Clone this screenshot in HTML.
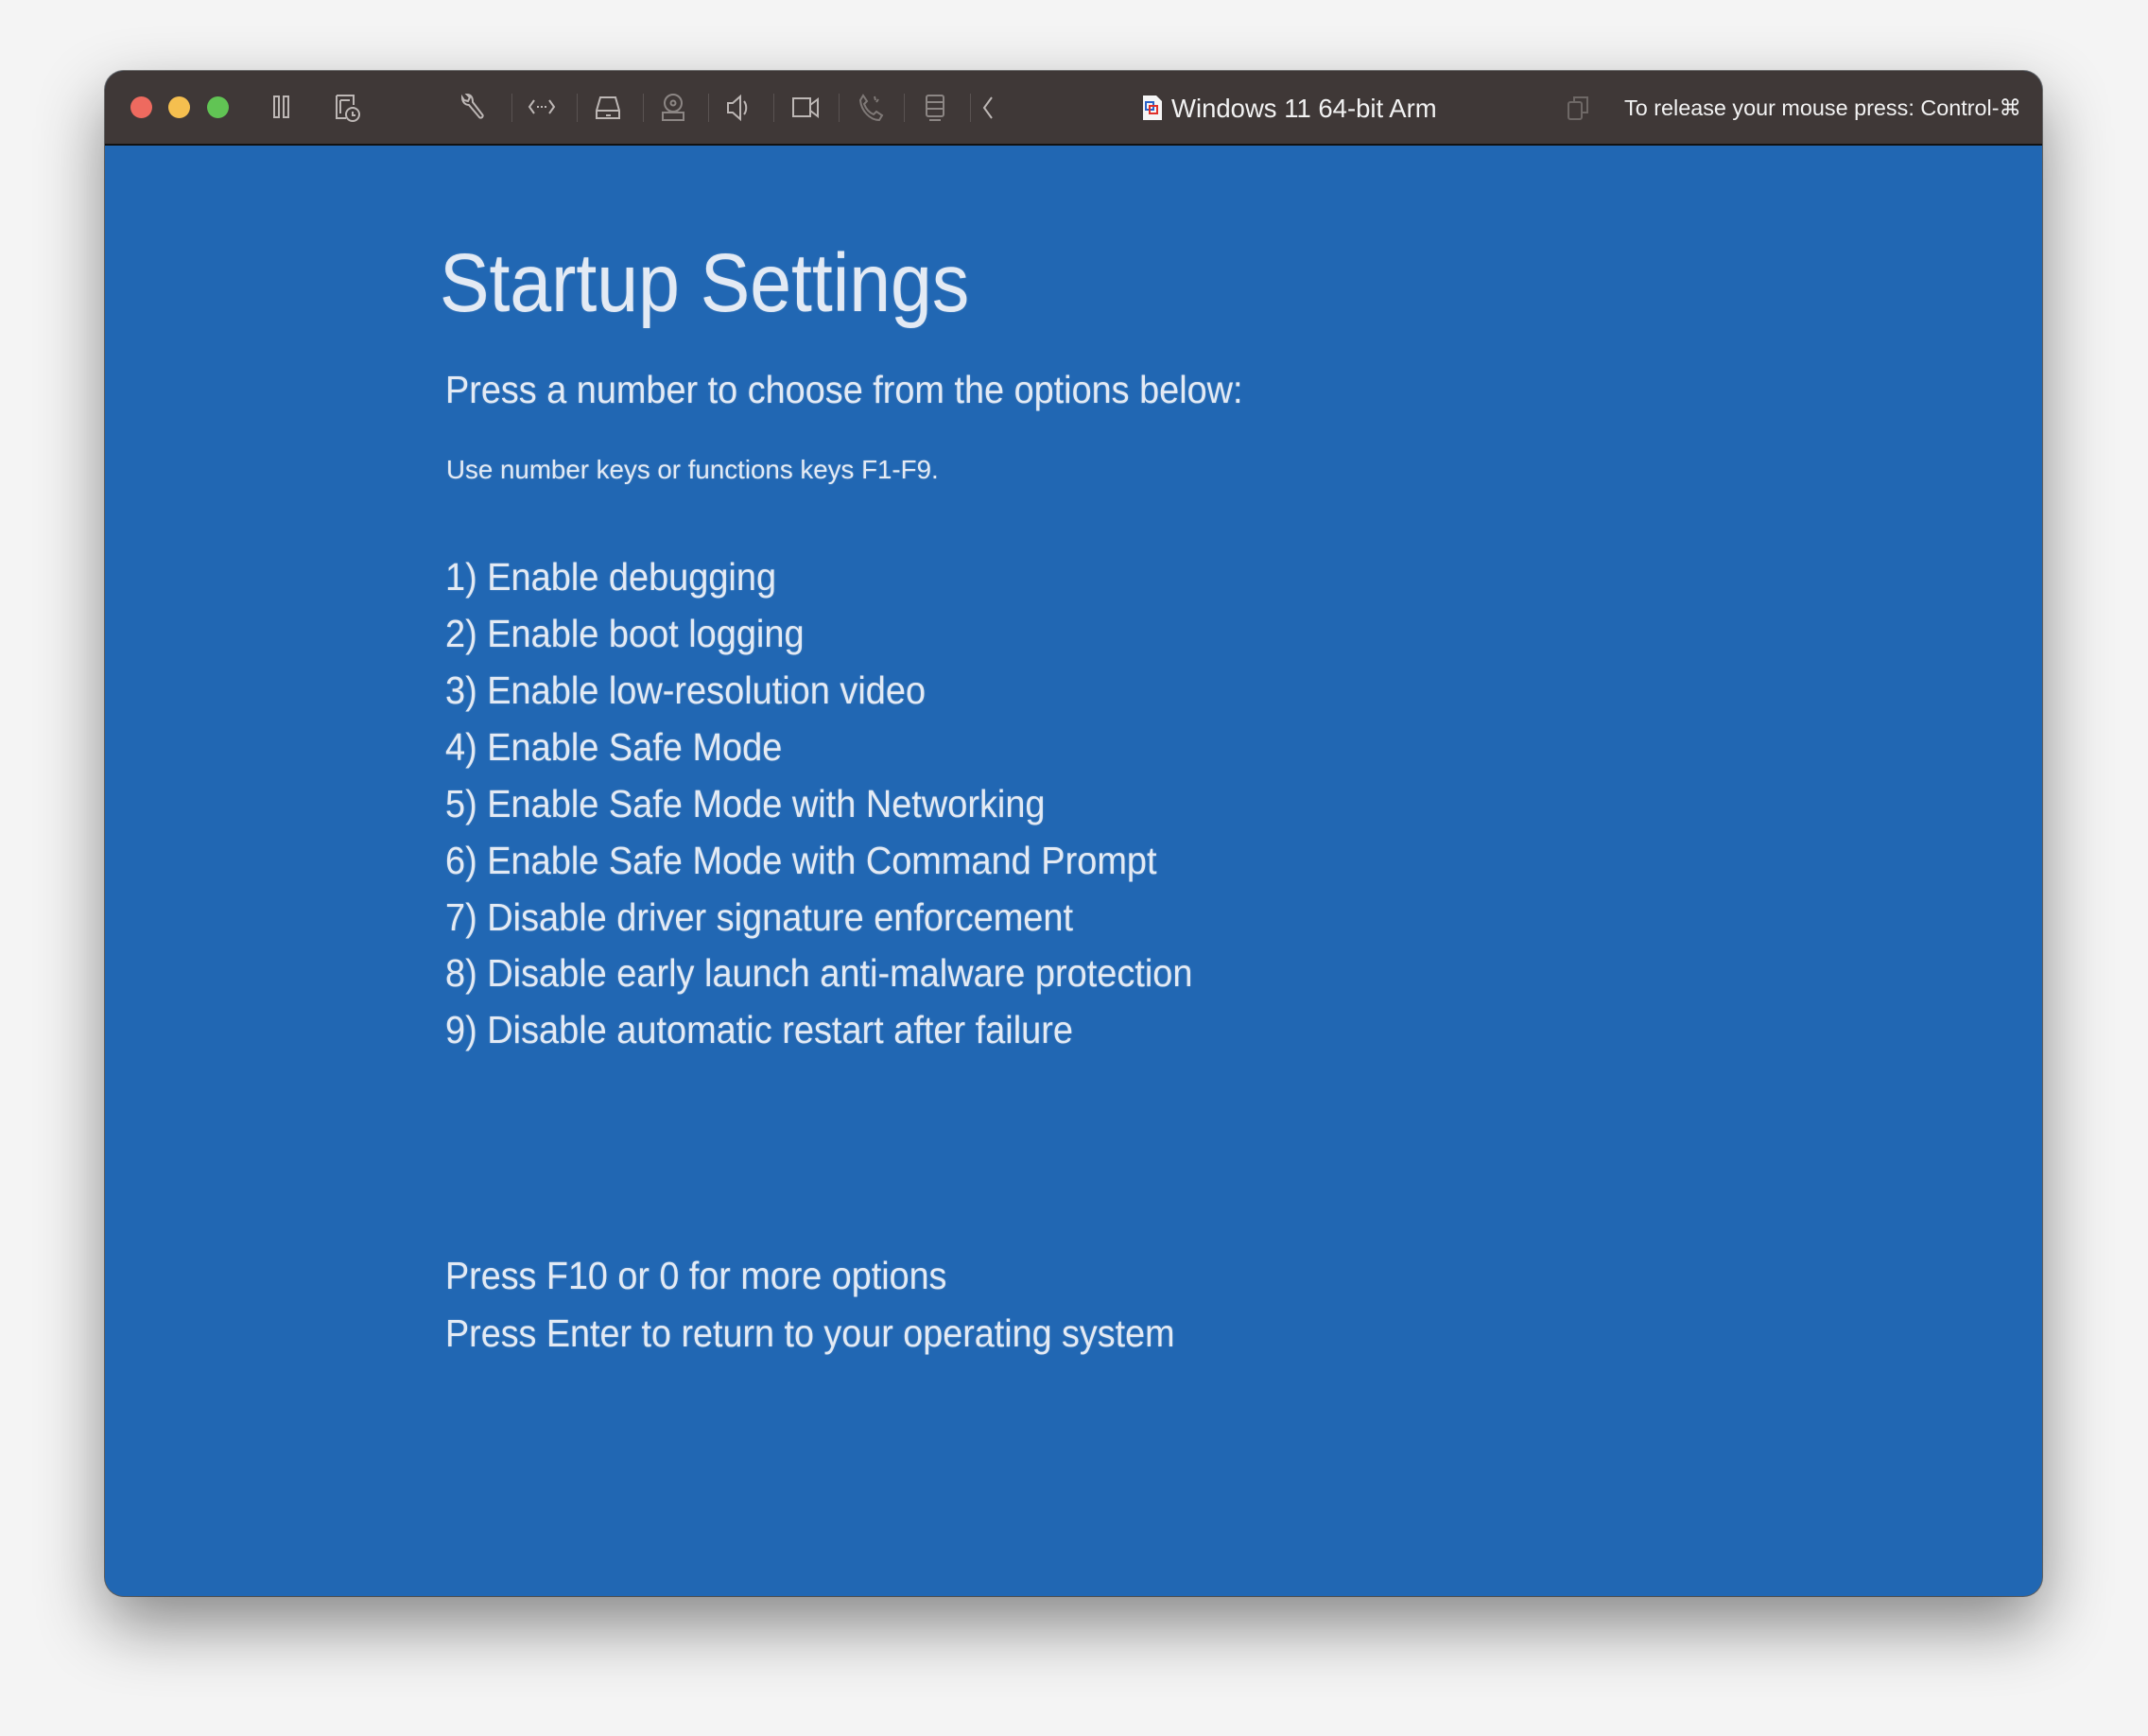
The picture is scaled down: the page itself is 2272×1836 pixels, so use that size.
<!DOCTYPE html>
<html><head><meta charset="utf-8"><style>
html,body{margin:0;padding:0;}
body{width:2272px;height:1836px;background:#f4f4f4;position:relative;overflow:hidden;font-family:"Liberation Sans",sans-serif;}
.win{position:absolute;left:111px;top:75px;width:2049px;height:1613px;border-radius:20px;overflow:hidden;box-shadow:0 30px 70px rgba(0,0,0,.45),0 0 0 1px rgba(0,0,0,.5);background:#2167b3;}
.bar{position:absolute;left:0;top:0;width:100%;height:77px;background:#3f3837;border-bottom:2px solid #111;}
.dot{position:absolute;top:27px;width:23px;height:23px;border-radius:50%;}
.ic{position:absolute;top:22px;}
.sep{position:absolute;top:24px;width:1px;height:30px;background:#5a5352;}
.t{position:absolute;color:#f2f2f2;font-size:25px;line-height:1;white-space:nowrap;}
.txt{position:absolute;left:0;color:#e3eaf4;white-space:nowrap;line-height:1;transform-origin:0 0;text-shadow:0 0 2px rgba(255,255,255,.3);}
.it{font-size:41px;transform:scaleX(0.925);left:360px;}
</style></head><body>
<div class="win">
 <div class="bar">
  <div class="dot" style="left:27px;background:#ee6a5f"></div>
  <div class="dot" style="left:67px;background:#f5bf4f"></div>
  <div class="dot" style="left:108px;background:#61c454"></div>
  <svg class="ic" style="left:172px" width="30" height="32" viewBox="0 0 30 32" fill="none" stroke="#bdb7b5" stroke-width="2"><rect x="7" y="5" width="5" height="22"/><rect x="17" y="5" width="5" height="22"/></svg>
  <svg class="ic" style="left:241px" width="32" height="34" viewBox="0 0 32 34" fill="none" stroke="#bdb7b5" stroke-width="2"><path d="M4 4h18v10M4 4v24h10M8 9h10M8 9v14"/><circle cx="21" cy="24" r="7"/><path d="M21 21v4h3"/></svg>
  <svg class="ic" style="left:375px" width="32" height="34" viewBox="0 0 32 34" fill="none" stroke="#bdb7b5" stroke-width="2"><path d="M8 3l3 3-2 4-4-1-2-3c0 5 3 8 7 8l11 13c2 2 5-1 3-3L14 11c0-5-2-8-6-8z"/></svg>
  <div class="sep" style="left:430px"></div>
  <svg class="ic" style="left:446px" width="32" height="32" viewBox="0 0 32 32" fill="none" stroke="#bdb7b5" stroke-width="2"><path d="M8 9l-5 7 5 7M24 9l5 7-5 7" /><path d="M11 16h2M15 16h2M19 16h2"/></svg>
  <div class="sep" style="left:499px"></div>
  <svg class="ic" style="left:516px" width="32" height="34" viewBox="0 0 32 34" fill="none" stroke="#bdb7b5" stroke-width="2"><path d="M8 6h16l4 14v8H4v-8z"/><path d="M4 20h24M14 25h5"/></svg>
  <div class="sep" style="left:569px"></div>
  <svg class="ic" style="left:585px" width="32" height="34" viewBox="0 0 32 34" fill="none" stroke="#8c8684" stroke-width="2"><circle cx="16" cy="12" r="9"/><circle cx="16" cy="12" r="2.5"/><path d="M5 22h22v8H5z"/></svg>
  <div class="sep" style="left:638px"></div>
  <svg class="ic" style="left:654px" width="32" height="34" viewBox="0 0 32 34" fill="none" stroke="#bdb7b5" stroke-width="2"><path d="M5 12h5l8-7v24l-8-7H5z"/><path d="M22 10c3 4 3 10 0 14"/></svg>
  <div class="sep" style="left:707px"></div>
  <svg class="ic" style="left:725px" width="32" height="34" viewBox="0 0 32 34" fill="none" stroke="#bdb7b5" stroke-width="2"><rect x="3" y="7" width="18" height="19"/><path d="M21 14l8-6v18l-8-6"/></svg>
  <div class="sep" style="left:776px"></div>
  <svg class="ic" style="left:794px" width="32" height="34" viewBox="0 0 32 34" fill="none" stroke="#7f7977" stroke-width="2"><path d="M8 4l4 6-3 3c2 5 5 9 10 11l3-3 6 4-3 5c-10 0-19-10-20-21z"/><path d="M20 5l1 4M24 8l-2 3"/></svg>
  <div class="sep" style="left:845px"></div>
  <svg class="ic" style="left:862px" width="32" height="34" viewBox="0 0 32 34" fill="none" stroke="#8c8684" stroke-width="2"><rect x="7" y="4" width="18" height="22" rx="2"/><path d="M7 11h18M7 18h18M10 30h12"/></svg>
  <div class="sep" style="left:915px"></div>
  <svg class="ic" style="left:924px" width="20" height="34" viewBox="0 0 20 34" fill="none" stroke="#bdb7b5" stroke-width="2"><path d="M14 6L6 17l8 11"/></svg>
  <svg class="ic" style="left:1096px;top:24px" width="24" height="30" viewBox="0 0 24 30"><path d="M2 2h14l6 6v20H2z" fill="#f5f5f5"/><rect x="5" y="9" width="8" height="8" fill="none" stroke="#2a62c9" stroke-width="2"/><rect x="9" y="13" width="8" height="8" fill="none" stroke="#e0302a" stroke-width="2"/></svg>
  <div class="t" style="left:1128px;top:26px;font-size:27.5px">Windows 11 64-bit Arm</div>
  <svg class="ic" style="left:1545px;top:24px" width="28" height="30" viewBox="0 0 28 30" fill="none" stroke="#6e6866" stroke-width="2"><rect x="3" y="9" width="14" height="18" rx="2"/><path d="M9 9V4h14v16h-6"/></svg>
  <div class="t" style="left:1607px;top:28px;font-size:23.4px">To release your mouse press: Control-⌘</div>
 </div>
 <div class="txt" style="left:354px;top:181px;font-size:87px;transform:scaleX(0.905)">Startup Settings</div>
 <div class="txt" style="left:360px;top:317px;font-size:41px;transform:scaleX(0.923)">Press a number to choose from the options below:</div>
 <div class="txt" style="left:361px;top:408px;font-size:28px;transform:scaleX(0.99)">Use number keys or functions keys F1-F9.</div>
 <div class="txt it" style="top:515px">1) Enable debugging</div>
 <div class="txt it" style="top:575px">2) Enable boot logging</div>
 <div class="txt it" style="top:635px">3) Enable low-resolution video</div>
 <div class="txt it" style="top:695px">4) Enable Safe Mode</div>
 <div class="txt it" style="top:755px">5) Enable Safe Mode with Networking</div>
 <div class="txt it" style="top:815px">6) Enable Safe Mode with Command Prompt</div>
 <div class="txt it" style="top:875px">7) Disable driver signature enforcement</div>
 <div class="txt it" style="top:934px">8) Disable early launch anti-malware protection</div>
 <div class="txt it" style="top:994px">9) Disable automatic restart after failure</div>
 <div class="txt" style="left:360px;top:1254px;font-size:41px;transform:scaleX(0.92)">Press F10 or 0 for more options</div>
 <div class="txt" style="left:360px;top:1315px;font-size:41px;transform:scaleX(0.92)">Press Enter to return to your operating system</div>
</div>
</body></html>
